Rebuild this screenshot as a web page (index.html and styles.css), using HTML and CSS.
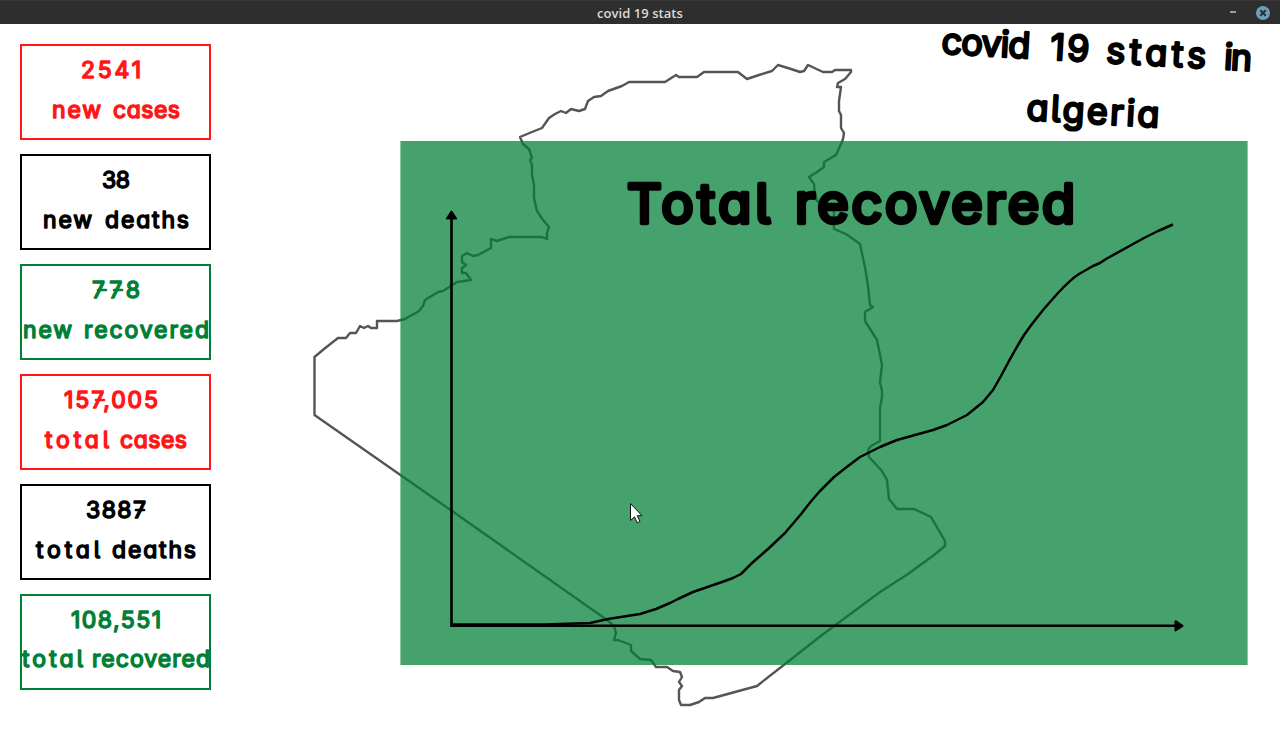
FILE: index.html
```html
<!DOCTYPE html>
<html lang="en">
<head>
<meta charset="utf-8">
<title>covid 19 stats</title>
<link rel="stylesheet" href="styles.css">
</head>
<body>
<header class="titlebar">
  <span class="titlebar-text">covid 19 stats</span>
  <div class="controls">
    <span class="minimize"></span>
    <svg class="close" viewBox="0 0 14 14"><circle cx="7" cy="7" r="7"/><path d="M4.300 4.300l5.400 5.400M9.700 4.300L4.300 9.700"/></svg>
  </div>
</header>
<main class="window">
  <aside class="cards">
    <div class="card red"><svg class="lettering" viewBox="20 0 191 96">
      <text y="34"><tspan x="81" textLength="60">2541</tspan></text>
      <text y="74"><tspan x="52" textLength="49">new</tspan> <tspan x="113" textLength="67">cases</tspan></text></svg></div>
    <div class="card black"><svg class="lettering" viewBox="20 0 191 96">
      <text y="34"><tspan x="102" textLength="28">38</tspan></text>
      <text y="74"><tspan x="43" textLength="49">new</tspan> <tspan x="105" textLength="84">deaths</tspan></text></svg></div>
    <div class="card green"><svg class="lettering" viewBox="20 0 191 96">
      <text y="34"><tspan x="92" textLength="48">778</tspan></text>
      <path class="bar" d="M98 26h8M114 26h8"/>
      <text y="74"><tspan x="23" textLength="49">new</tspan> <tspan x="84" textLength="125">recovered</tspan></text></svg></div>
    <div class="card red"><svg class="lettering" viewBox="20 0 191 96">
      <text y="34"><tspan x="64" textLength="94">157,005</tspan></text>
      <path class="bar" d="M96 26h8"/>
      <text y="74"><tspan x="45" textLength="64">total</tspan> <tspan x="120" textLength="67">cases</tspan></text></svg></div>
    <div class="card black"><svg class="lettering" viewBox="20 0 191 96">
      <text y="34"><tspan x="86" textLength="60">3887</tspan></text>
      <path class="bar" d="M136 26h8"/>
      <text y="74"><tspan x="36" textLength="64">total</tspan> <tspan x="112" textLength="84">deaths</tspan></text></svg></div>
    <div class="card green"><svg class="lettering" viewBox="20 0 191 96">
      <text y="34"><tspan x="71" textLength="90">108,551</tspan></text>
      <text y="73"><tspan x="22" textLength="61">total</tspan> <tspan x="92" textLength="118">recovered</tspan></text></svg></div>
  </aside>
  <svg class="stage" viewBox="211 24 1069 720">
    <path class="map" d="M520 137L532 132L542 128L549 118L555 114L561 111L566 113L571 109L579 111L585 109L588 101L594 97L601 96L608 91L622 86L629 82H665L676 75L679 77H697L704 72H738L747 79L759 75L772 71L778 65L791 69L800 72L804 71L808 65L823 72H832L835 70H851V72L845 79L838 83L837 87H841L839 101V111L841 115V128L844 133L843 139L841 144L836 155L824 162V167L817 172L809 177L814 184L815 194L817 201L834 210V229L846 234L860 244L865 267L868 286L870 305L873 307L865 312V321L877 340L882 365L880 382L882 391V397L880 408V441L871 446L868 450L869 457L882 471L887 480L889 499L897 509H914L931 517L945 541V546L934 555L908 574L880 592L822 635L785 664L757 686L713 698H705L699 702L690 705H681L679 700V690L682 686L679 682L682 677L680 672L673 671L667 667H656L651 660L640 659L631 651V645L618 640H614L616 633L614 626L607 620L580 601L452 511L314.500 415V357L324 349L338 338H346L350 333H356L360 326L364 328L368 326L371 328H377V321H397L405 319L419 311L423 306L425 300L438 292L443 291L457 282L471 280L466 273H462V268L466 265L462 262V256L467 253L473 256L478 255L491 248V239L497 241L509 237H542L547 239V233L549 227L543 220L537 211L534 198V185L532 175V165L530 160L532 158L529 149L523 144Z"/>
    <rect class="panel" x="400.4" y="141" width="847.2" height="524"/>
    <path class="axis" d="M451.5 217V625.8H1176"/>
    <path class="tip" d="M451.5 211.5l4.600 7h-9.200zM1182.500 625.800l-7 -4.600v9.200z"/>
    <path class="curve" d="M452 624.500H545L590 623L608 619L640 614L656 609L670 603L678 599L693 592L722 582L733 578L741 574L752 563L768 549L785 533L802 513Q810 502 820 491L834 477L848 466L860 457L880 447L897 440L933 430L947 425L967 415L983 402L993 390L1001 376Q1013 353 1024 335L1032 324Q1044 308 1058 293Q1071 279 1079 274L1093 266L1100 263L1106 259L1144 238L1158 231L1173 224.500"/>
    <text class="heading" transform="translate(941 53.500) rotate(3.200)"><tspan x="0" textLength="89">covid</tspan> <tspan x="109" textLength="39">19</tspan> <tspan x="165" textLength="100">stats</tspan> <tspan x="283" textLength="28">in</tspan></text>
    <text class="heading" transform="translate(1026 120) rotate(3.200)"><tspan x="0" textLength="133">algeria</tspan></text>
    <text class="chart-title" y="223"><tspan x="627" textLength="143">Total</tspan> <tspan x="795" textLength="280">recovered</tspan></text>
    <path class="cursor" d="M630.500 503.500v17l4-3.700 2.700 6 2.800-1.300-2.700-5.800h4.700z"/>
  </svg>
</main>
</body>
</html>
```

FILE: styles.css
```css
body { margin: 0; background: #fff; overflow: hidden; }
.titlebar {
  display: grid; grid-template-columns: 1fr auto 1fr; align-items: center;
  height: 24px; box-sizing: border-box; padding-top: 1px;
  background: #2e2e2e; border-top: 1px solid #393939; color: #dadada;
}
.titlebar-text {
  grid-column: 2; font: 600 13px/21px "Open Sans", sans-serif; letter-spacing: .05px;
}
.controls { display: flex; justify-content: flex-end; align-items: center; gap: 20px; padding-right: 10px; }
.minimize { width: 6px; height: 2px; margin-top: -2px; background: #999; }
.close { width: 14px; height: 14px; margin-top: -1px; }
.close circle { fill: #6a9fc0; }
.close path { stroke: #2e2e2e; stroke-width: 2; }
.window { display: flex; height: 720px; }
.cards { display: flex; flex-direction: column; gap: 14px; padding: 20px 0 0 20px; }
.card { box-sizing: border-box; width: 191px; height: 96px; border: 2px solid currentColor; }
.lettering { display: block; width: 191px; height: 96px; margin: -2px; overflow: visible; }
.red { color: #ff1616; }
.black { color: #000; }
.green { color: #008037; }
text {
  font-family: Inter, "Open Sans", sans-serif; font-weight: 400;
  font-feature-settings: "cv11", "cv05";
  stroke-linejoin: round; stroke-linecap: round;
}
.lettering text { font-size: 23px; fill: currentColor; stroke: currentColor; stroke-width: 1.5; }
.bar { stroke: currentColor; stroke-width: 2.6; stroke-linecap: round; }
.stage { width: 1069px; height: 720px; overflow: visible; }
.map { fill: none; stroke: #555; stroke-width: 2.4; stroke-linejoin: round; }
.panel { fill: #008037; fill-opacity: .73; }
.axis { fill: none; stroke: #000; stroke-width: 2.6; }
.tip { stroke: #000; stroke-width: 2; stroke-linejoin: round; }
.curve { fill: none; stroke: #000; stroke-width: 2.5; stroke-linejoin: round; }
.heading { font-size: 36px; stroke: #000; stroke-width: 2.4; }
.chart-title { font-size: 54px; stroke: #000; stroke-width: 4.4; }
.cursor { fill: #fff; stroke: #111; stroke-width: 1; }
```
